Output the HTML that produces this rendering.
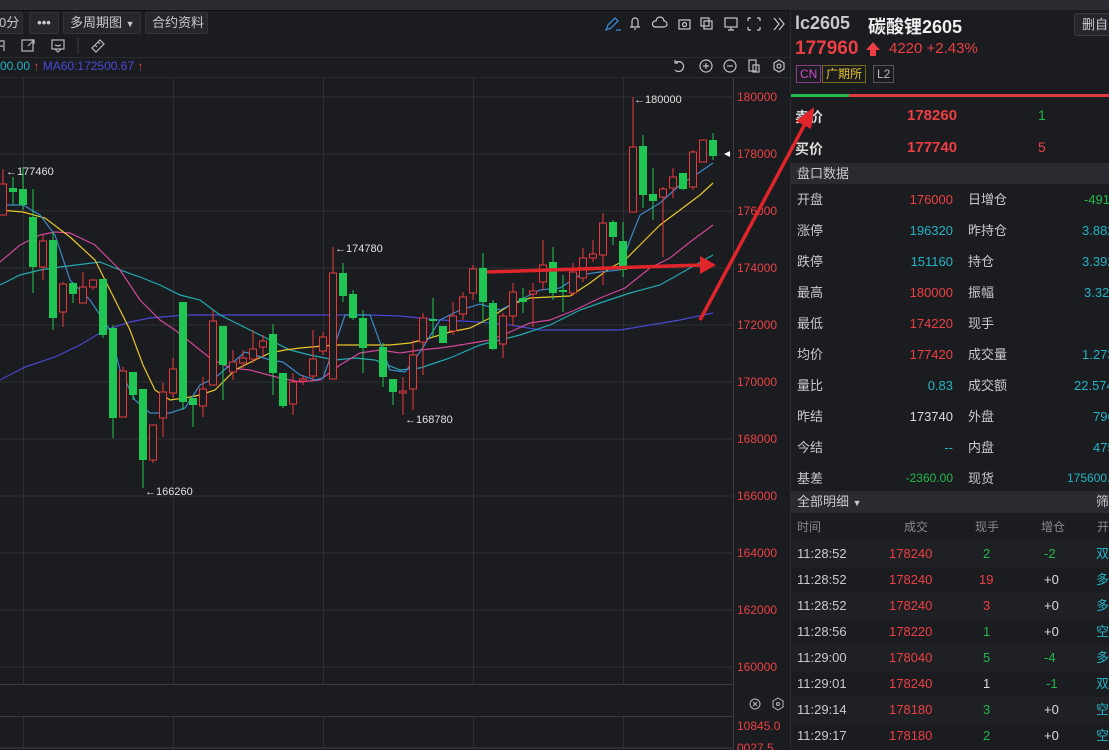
<!DOCTYPE html>
<html><head><meta charset="utf-8"><style>
*{margin:0;padding:0;box-sizing:border-box}
body{width:1109px;height:750px;overflow:hidden;background:#1b1c20;font-family:"Liberation Sans","Noto Sans CJK SC",sans-serif;color:#c9c9cc;position:relative}
.a{position:absolute;white-space:nowrap}
.btn{position:absolute;top:12px;height:22px;border:1px solid #33343a;background:#26272c;border-radius:2px;font-size:13px;line-height:20px;color:#c9c9cc;padding:0 6px;white-space:nowrap}
.r{color:#ec3f43}.g{color:#22b84a}.c{color:#23b3c2}.w{color:#dcdcdc}
</style></head><body>
<div class="a" style="left:0;top:0;width:1109px;height:10px;background:#2b2c31"></div>
<div class="a" style="left:0;top:10px;width:790px;height:1px;background:#111"></div>
<div class="btn" style="left:-8px;width:31px;padding:0 0 0 6px">0分</div>
<div class="btn" style="left:29px;width:30px;text-align:center;font-weight:bold;padding:0">•••</div>
<div class="btn" style="left:63px;width:78px">多周期图 <span style="font-size:9px">▼</span></div>
<div class="btn" style="left:145px;width:63px">合约资料</div>
<!-- icon row -->
<svg class="a" style="left:0;top:36px" width="120" height="20" fill="none" stroke="#b8b8bc" stroke-width="1.2">
<path d="M0 5h4v4M0 10h4v5"/><rect x="22" y="4" width="11" height="11"/><path d="M28 10l6-6M30 4h4v4"/>
<rect x="52" y="4" width="12" height="9"/><path d="M55 13l3 3 3-3M55 9l3 1 3-1"/>
<path d="M78 2v16" stroke="#3a3b40"/><path d="M92 12l8-8 4 4-8 8z M95 9l2 2M98 6l2 2"/>
</svg>
<div class="a" style="left:0;top:57px;width:790px;height:1px;background:#2a2b30"></div>
<div class="a" style="left:0;top:59px;font-size:12px"><span class="c">00.00</span> <span class="r">↑</span> <span style="color:#4a4ad6">MA60:172500.67</span> <span class="r">↑</span></div>
<!-- top right icons -->
<svg class="a" style="left:600px;top:12px" width="190" height="22" fill="none" stroke="#c8c8cc" stroke-width="1.2">
<path d="M6 18l2-5 7-7 3 3-7 7-5 2zM16 18h5" stroke="#3a8fe0"/>
<path d="M30 15h10M32 15V9a3 3 0 016 0v6M34 17h2"/>
<path d="M55 15h9a3 3 0 000-6 4 4 0 00-8 0 3 3 0 00-1 6z"/>
<rect x="79" y="8" width="11" height="9"/><circle cx="84.5" cy="12.5" r="2"/>
<rect x="101" y="6" width="8" height="8"/><rect x="104" y="9" width="8" height="8"/>
<rect x="125" y="6" width="12" height="9"/><path d="M128 18h6M131 15v3"/>
<path d="M148 6h3M148 6v3M160 6h-3M160 6v3M148 18h3M148 18v-3M160 18h-3M160 18v-3"/>
<path d="M174 6l5 6-5 6M179 6l5 6-5 6"/>
</svg>
<svg class="a" style="left:670px;top:57px" width="120" height="20" fill="none" stroke="#c0c0c4" stroke-width="1.2">
<path d="M8 6H5v-3M5 6a5 5 0 110 7"/><circle cx="36" cy="9" r="6"/><path d="M33 9h6M36 6v6"/>
<circle cx="60" cy="9" r="6"/><path d="M57 9h6"/><rect x="79" y="3" width="7" height="11"/><rect x="83" y="8" width="6" height="7"/>
<path d="M109 3l5 3v6l-5 3-5-3V6z"/><circle cx="109" cy="9" r="2"/>
</svg>
<div class="a" style="left:0;top:77px;width:790px;height:1px;background:#2a2b30"></div>
<!-- chart -->
<svg class="a" style="left:0;top:78px" width="790" height="672" viewBox="0 78 790 672">
<g stroke="#2e2f34" stroke-width="1">
<path d="M0 97H733M0 154H733M0 211H733M0 268H733M0 325H733M0 382H733M0 439H733M0 496H733M0 553H733M0 610H733M0 667H733"/>
<path d="M23.5 78V684M173.5 78V684M323.5 78V684M473.5 78V684M623.5 78V684M23.5 716V750M173.5 716V750M323.5 716V750M473.5 716V750M623.5 716V750"/>
<path d="M0 684.5H733M0 716.5H733M0 748H733M733.5 78V750" stroke="#3a3b40"/>
</g>
<g font-size="12" fill="#e84246" font-family="Liberation Sans">
<text x="737" y="101">180000</text><text x="737" y="158">178000</text><text x="737" y="215">176000</text><text x="737" y="272">174000</text><text x="737" y="329">172000</text><text x="737" y="386">170000</text><text x="737" y="443">168000</text><text x="737" y="500">166000</text><text x="737" y="557">164000</text><text x="737" y="614">162000</text><text x="737" y="671">160000</text>
<text x="737" y="730">10845.0</text><text x="737" y="752">0027.5</text>
</g>
<g fill="none" stroke="#b8b8bc"><circle cx="755" cy="704" r="5"/><path d="M753 702l4 4M757 702l-4 4"/><path d="M778 698l5 3v6l-5 3-5-3v-6z"/><circle cx="778" cy="704" r="1.5"/></g>
<path d="M724 154l6-3v6z" fill="#fff"/>
<g fill="none" stroke-width="1.2">
<polyline stroke="#4848d0" points="0,380 25,367 55,357 80,345 105,330 130,322 150,318 185,315 250,315 330,315 370,315 400,316 440,320 480,322 510,325 540,330 620,330 650,325 680,320 713,313"/>
<polyline stroke="#22a9b0" points="0,285 20,275 40,270 60,267 100,262 120,270 140,277 160,285 180,295 200,300 220,315 250,330 270,340 290,350 310,355 335,360 355,358 375,360 400,370 420,368 450,358 480,345 500,340 520,335 550,325 580,310 600,303 630,293 660,285 690,268 713,255"/>
<polyline stroke="#d0479a" points="0,262 20,245 40,235 55,232 70,233 95,245 120,270 140,300 160,320 175,330 190,342 210,358 230,368 250,370 280,378 300,382 320,380 340,365 360,353 380,350 400,353 420,350 440,348 460,345 490,340 510,332 530,323 550,320 575,310 600,298 625,288 650,268 670,258 690,242 713,225"/>
<polyline stroke="#e8c52a" points="0,210 23,212 45,218 70,237 95,260 115,300 130,330 143,365 155,390 170,400 185,398 200,395 215,390 235,370 255,360 270,353 285,350 300,348 335,345 390,345 410,343 430,338 450,332 470,328 490,318 510,305 530,298 570,296 590,283 610,268 625,260 640,245 660,225 680,210 700,195 713,183"/>
<polyline stroke="#3a88c8" points="0,205 23,205 40,215 55,235 70,280 90,300 110,330 120,370 135,400 150,413 170,413 185,408 200,385 215,378 230,365 245,352 255,355 270,360 283,362 300,375 315,380 323,378 333,350 345,315 370,315 390,370 405,372 420,352 440,320 460,310 480,304 500,310 520,300 540,290 560,288 580,275 600,272 620,270 630,240 640,215 660,203 680,185 700,172 713,163"/>
</g>
<g id="cs"></g>
<g font-size="11" fill="#e0e0e0" font-family="Liberation Sans">
<text x="6" y="175">←177460</text><text x="335" y="252">←174780</text><text x="405" y="423">←168780</text><text x="145" y="495">←166260</text><text x="634" y="103">←180000</text>
</g>
</svg>
<script>
var d=[[3,184,215,169,215,'r'],[13,188,192,177,205,'g'],[23,189,205,167,210,'g'],[33,217,267,189,293,'g'],[43,241,267,235,280,'r'],[53,240,318,232,330,'g'],[63,284,312,282,327,'r'],[73,283,294,283,303,'g'],[83,287,303,272,303,'r'],[93,280,287,280,290,'r'],[103,279,335,279,338,'g'],[113,328,418,325,438,'g'],[123,371,417,367,417,'r'],[133,372,395,372,400,'g'],[143,389,460,389,488,'g'],[153,425,460,425,463,'r'],[163,392,418,383,437,'r'],[173,369,393,358,398,'r'],[183,302,402,302,410,'g'],[193,398,405,398,427,'g'],[203,389,406,377,417,'r'],[213,321,385,310,385,'r'],[223,326,365,326,400,'g'],[233,362,372,350,380,'r'],[243,358,363,350,368,'r'],[253,349,359,330,363,'r'],[263,341,347,335,357,'r'],[273,334,373,324,395,'g'],[283,373,406,373,408,'g'],[293,382,404,373,415,'r'],[303,379,381,375,385,'r'],[313,359,376,330,380,'r'],[323,337,351,332,355,'r'],[333,273,379,247,379,'r'],[343,273,296,263,302,'g'],[353,294,318,290,320,'g'],[363,318,348,310,373,'g'],[383,347,377,343,387,'g'],[393,379,392,379,405,'g'],[403,391,393,377,415,'r'],[413,355,389,340,410,'r'],[423,318,342,313,375,'r'],[433,319,321,298,337,'g'],[443,326,343,326,343,'g'],[453,316,331,302,335,'r'],[463,297,314,292,320,'r'],[473,269,293,265,300,'r'],[483,268,302,253,323,'g'],[493,303,349,300,350,'g'],[503,316,344,313,358,'r'],[513,292,316,283,326,'r'],[523,298,302,288,313,'g'],[533,291,294,283,327,'r'],[543,265,282,240,290,'r'],[553,262,293,247,300,'g'],[563,290,292,275,312,'g'],[573,272,293,263,296,'r'],[583,258,278,248,282,'r'],[593,254,258,240,262,'r'],[603,223,255,213,285,'r'],[613,222,237,220,245,'g'],[623,241,270,222,277,'g'],[633,147,212,97,212,'r'],[643,146,195,135,208,'g'],[653,194,201,168,220,'g'],[663,189,197,187,257,'r'],[673,177,188,168,198,'r'],[683,173,189,173,190,'g'],[693,152,187,150,190,'r'],[703,140,162,140,162,'r'],[713,140,156,133,160,'g']];
var s='';d.forEach(function(c){var col=c[5]=='r'?'#e8383d':'#1fc752';s+='<line x1="'+c[0]+'" x2="'+c[0]+'" y1="'+c[3]+'" y2="'+c[4]+'" stroke="'+col+'"/>';var h=Math.max(c[2]-c[1],2);if(c[5]=='r')s+='<rect x="'+(c[0]-3.5)+'" y="'+c[1]+'" width="7" height="'+h+'" fill="#1b1c20" stroke="'+col+'"/>';else s+='<rect x="'+(c[0]-4)+'" y="'+c[1]+'" width="8" height="'+h+'" fill="'+col+'"/>';});
document.getElementById('cs').innerHTML=s;
</script>
<!-- right panel -->
<div class="a" style="left:790px;top:10px;width:1px;height:740px;background:#2c2d32"></div>
<div class="a" style="left:795px;top:13px;font-size:18px;font-weight:bold;color:#c9c9cc">lc2605</div>
<div class="a" style="left:868px;top:13px;font-size:18px;font-weight:bold;color:#eee">碳酸锂2605</div>
<div class="a" style="left:1074px;top:13px;width:50px;height:23px;border:1px solid #3a3b40;border-radius:3px;background:#26272c;font-size:13px;line-height:21px;padding-left:7px">删自</div>
<div class="a r" style="left:795px;top:38px;font-size:19px;font-weight:bold">177960</div>
<svg class="a" style="left:865px;top:41px" width="16" height="16"><path d="M8 1l7 8h-4v6H5V9H1z" fill="#ec3f43"/></svg>
<div class="a r" style="left:889px;top:40px;font-size:15px">4220 +2.43%</div>
<div class="a" style="left:796px;top:65px;height:18px;border:1px solid #8b3a8b;color:#d04ad0;font-size:12px;line-height:16px;padding:0 3px">CN</div>
<div class="a" style="left:822px;top:65px;height:18px;border:1px solid #7a6a1a;color:#e8c52a;font-size:12px;line-height:16px;padding:0 3px">广期所</div>
<div class="a" style="left:873px;top:65px;height:18px;border:1px solid #555;color:#bbb;font-size:12px;line-height:16px;padding:0 3px">L2</div>
<div class="a" style="left:791px;top:94px;width:58px;height:3px;background:#22b84a"></div>
<div class="a" style="left:849px;top:94px;width:260px;height:3px;background:#e03c40"></div>
<div class="a w" style="left:795px;top:107px;font-size:14px;font-weight:bold">卖价</div>
<div class="a r" style="left:907px;top:107px;font-size:15px;font-weight:bold">178260</div>
<div class="a g" style="left:1038px;top:107px;font-size:14px">1</div>
<div class="a w" style="left:795px;top:139px;font-size:14px;font-weight:bold">买价</div>
<div class="a r" style="left:907px;top:139px;font-size:15px;font-weight:bold">177740</div>
<div class="a r" style="left:1038px;top:139px;font-size:14px">5</div>
<div class="a" style="left:791px;top:163px;width:318px;height:21px;background:#2a2b30;font-size:13px;line-height:21px;padding-left:6px">盘口数据</div>
<div class="a" style="left:791px;top:184px;width:318px;font-size:13px;line-height:31px">
<div style="position:relative;height:31px"><span class="a" style="left:6px">开盘</span><span class="a r" style="right:156px">176000</span><span class="a" style="left:177px">日增仓</span><span class="a g" style="left:293px">-491</span></div>
<div style="position:relative;height:31px"><span class="a" style="left:6px">涨停</span><span class="a c" style="right:156px">196320</span><span class="a" style="left:177px">昨持仓</span><span class="a c" style="left:291px">3.882</span></div>
<div style="position:relative;height:31px"><span class="a" style="left:6px">跌停</span><span class="a c" style="right:156px">151160</span><span class="a" style="left:177px">持仓</span><span class="a c" style="left:291px">3.392</span></div>
<div style="position:relative;height:31px"><span class="a" style="left:6px">最高</span><span class="a r" style="right:156px">180000</span><span class="a" style="left:177px">振幅</span><span class="a c" style="left:293px">3.32</span></div>
<div style="position:relative;height:31px"><span class="a" style="left:6px">最低</span><span class="a r" style="right:156px">174220</span><span class="a" style="left:177px">现手</span></div>
<div style="position:relative;height:31px"><span class="a" style="left:6px">均价</span><span class="a r" style="right:156px">177420</span><span class="a" style="left:177px">成交量</span><span class="a c" style="left:291px">1.273</span></div>
<div style="position:relative;height:31px"><span class="a" style="left:6px">量比</span><span class="a c" style="right:156px">0.83</span><span class="a" style="left:177px">成交额</span><span class="a c" style="left:283px">22.574</span></div>
<div style="position:relative;height:31px"><span class="a" style="left:6px">昨结</span><span class="a w" style="right:156px">173740</span><span class="a" style="left:177px">外盘</span><span class="a c" style="left:302px">796</span></div>
<div style="position:relative;height:31px"><span class="a" style="left:6px">今结</span><span class="a c" style="right:156px">--</span><span class="a" style="left:177px">内盘</span><span class="a c" style="left:302px">475</span></div>
<div style="position:relative;height:31px"><span class="a" style="left:6px">基差</span><span class="a g" style="right:156px;font-size:12px">-2360.00</span><span class="a" style="left:177px">现货</span><span class="a c" style="left:276px;font-size:12px">175600.0</span></div>
</div>
<div class="a" style="left:791px;top:491px;width:318px;height:22px;background:#2a2b30;font-size:13px;line-height:22px;padding-left:6px">全部明细 <span style="font-size:9px">▼</span><span class="a" style="left:305px">筛</span></div>
<div class="a" style="left:791px;top:513px;width:318px;font-size:12px;line-height:28px;color:#8a8a8e">
<span class="a" style="left:6px">时间</span><span class="a" style="left:113px">成交</span><span class="a" style="left:184px">现手</span><span class="a" style="left:250px">增仓</span><span class="a" style="left:306px">开</span></div>
<div class="a" style="left:791px;top:541px;width:318px;font-size:13px;line-height:26px">
<div style="position:relative;height:26px;background:#1f2024"><span class="a" style="left:6px">11:28:52</span><span class="a r" style="left:98px">178240</span><span class="a g" style="left:192px">2</span><span class="a g" style="left:253px">-2</span><span class="a c" style="left:305px">双</span></div>
<div style="position:relative;height:26px"><span class="a" style="left:6px">11:28:52</span><span class="a r" style="left:98px">178240</span><span class="a r" style="left:188px">19</span><span class="a w" style="left:253px">+0</span><span class="a c" style="left:305px">多</span></div>
<div style="position:relative;height:26px;background:#1f2024"><span class="a" style="left:6px">11:28:52</span><span class="a r" style="left:98px">178240</span><span class="a r" style="left:192px">3</span><span class="a w" style="left:253px">+0</span><span class="a c" style="left:305px">多</span></div>
<div style="position:relative;height:26px"><span class="a" style="left:6px">11:28:56</span><span class="a r" style="left:98px">178220</span><span class="a g" style="left:192px">1</span><span class="a w" style="left:253px">+0</span><span class="a c" style="left:305px">空</span></div>
<div style="position:relative;height:26px;background:#1f2024"><span class="a" style="left:6px">11:29:00</span><span class="a r" style="left:98px">178040</span><span class="a g" style="left:192px">5</span><span class="a g" style="left:253px">-4</span><span class="a c" style="left:305px">多</span></div>
<div style="position:relative;height:26px"><span class="a" style="left:6px">11:29:01</span><span class="a r" style="left:98px">178240</span><span class="a w" style="left:192px">1</span><span class="a g" style="left:255px">-1</span><span class="a c" style="left:305px">双</span></div>
<div style="position:relative;height:26px;background:#1f2024"><span class="a" style="left:6px">11:29:14</span><span class="a r" style="left:98px">178180</span><span class="a g" style="left:192px">3</span><span class="a w" style="left:253px">+0</span><span class="a c" style="left:305px">空</span></div>
<div style="position:relative;height:26px"><span class="a" style="left:6px">11:29:17</span><span class="a r" style="left:98px">178180</span><span class="a g" style="left:192px">2</span><span class="a w" style="left:253px">+0</span><span class="a c" style="left:305px">空</span></div>
</div>
<!-- arrows overlay -->
<svg class="a" style="left:0;top:0" width="1109" height="750">
<g stroke="#e0252b" stroke-width="3.5" fill="#e0252b">
<path d="M487 272L702 265"/><path d="M716 265l-16-9v18z" stroke="none"/>
<path d="M700 320L806 122"/><path d="M814 107l-3 22-15-8z" stroke="none"/>
</g>
</svg>
</body></html>
